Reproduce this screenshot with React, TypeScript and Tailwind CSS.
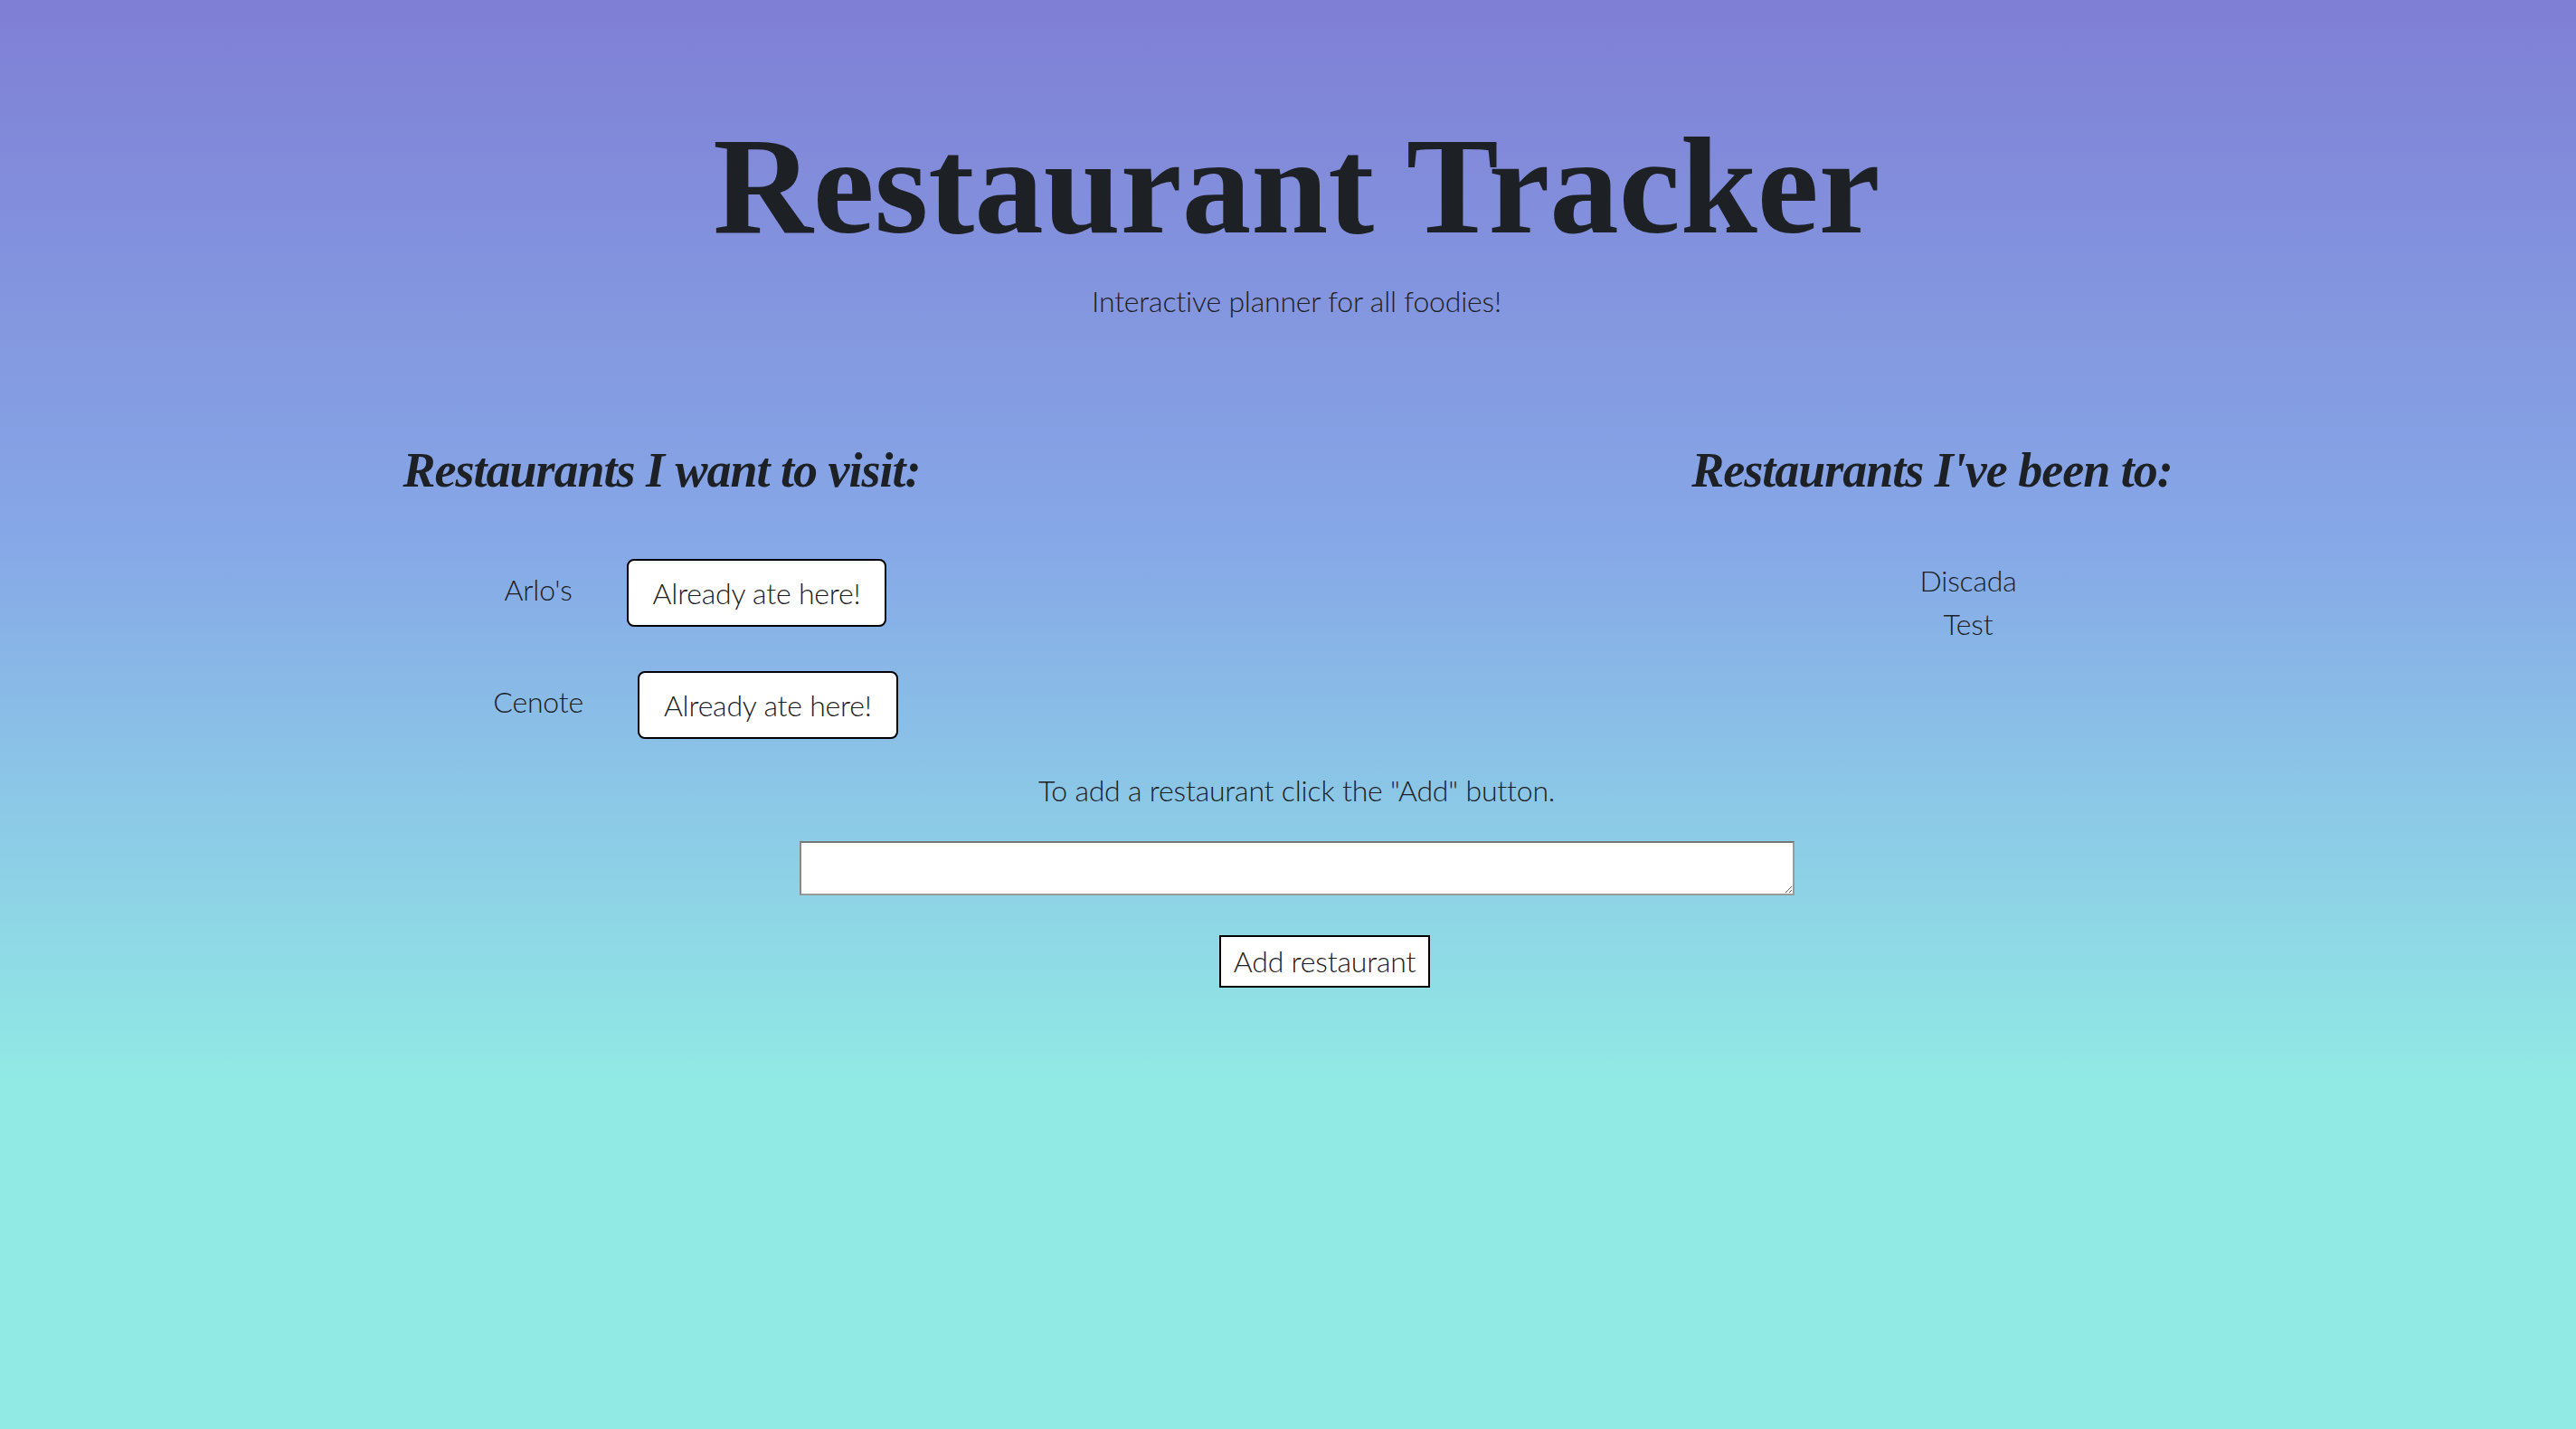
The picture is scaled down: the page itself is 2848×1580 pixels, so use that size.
import { useState } from "react";

export default function App() {
  const [wantToVisit, setWantToVisit] = useState<string[]>(["Arlo's", "Cenote"]);
  const [beenTo, setBeenTo] = useState<string[]>(["Discada", "Test"]);
  const [draft, setDraft] = useState("");

  function markVisited(name: string) {
    setWantToVisit(wantToVisit.filter((r) => r !== name));
    setBeenTo([...beenTo, name]);
  }

  function addRestaurant() {
    if (!draft.trim()) return;
    setWantToVisit([...wantToVisit, draft.trim()]);
    setDraft("");
  }

  return (
    <main className="min-h-screen bg-[#91eae4] bg-linear-to-b from-[#7f7fd5] via-[#86a8e7] to-[#91eae4] bg-[length:100%_1200px] bg-no-repeat font-['Lato',sans-serif] font-light text-[32px] leading-[48px] tracking-[-0.2px] text-[#1d2024]">
      <header className="pt-[129px] pl-[19px] text-center">
        <h1 className="font-['Liberation_Serif',serif] text-[153px] font-bold leading-none tracking-normal">
          Restaurant Tracker
        </h1>
        <p className="mt-[27px]">Interactive planner for all foodies!</p>
      </header>

      <section className="mt-[131px] grid grid-cols-2">
        <div>
          <h2 className="pl-[39px] text-center font-['Liberation_Serif',serif] text-[54px] font-bold italic leading-[64px] tracking-[-1px]">
            Restaurants I want to visit:
          </h2>
          <ul className="mt-[66px] flex flex-col gap-[49px] pl-[114px]">
            {wantToVisit.map((name) => (
              <li key={name} className="flex items-center justify-center gap-[60px]">
                <span className="pb-2">{name}</span>
                <button
                  onClick={() => markVisited(name)}
                  className="h-[75px] rounded-[8px] border-2 border-black bg-white px-[27px]"
                >
                  Already ate here!
                </button>
              </li>
            ))}
          </ul>
        </div>

        <div>
          <h2 className="text-center font-['Liberation_Serif',serif] text-[54px] font-bold italic leading-[64px] tracking-[-1px]">
            Restaurants I've been to:
          </h2>
          <ul className="mt-[66px] pl-[80px] text-center">
            {beenTo.map((name) => (
              <li key={name}>{name}</li>
            ))}
          </ul>
        </div>
      </section>

      <section className="mt-[33px] flex flex-col items-center pl-[19px]">
        <p>To add a restaurant click the "Add" button.</p>
        <textarea
          value={draft}
          onChange={(e) => setDraft(e.target.value)}
          className="mt-[32px] block h-[60px] w-[1100px] border-2 border-[#9a9a9a] border-t-[#767676] border-l-[#888] bg-white"
        />
        <button
          onClick={addRestaurant}
          className="ml-[62px] mt-[44px] h-[58px] border-2 border-black bg-white px-[14px]"
        >
          Add restaurant
        </button>
      </section>
    </main>
  );
}
